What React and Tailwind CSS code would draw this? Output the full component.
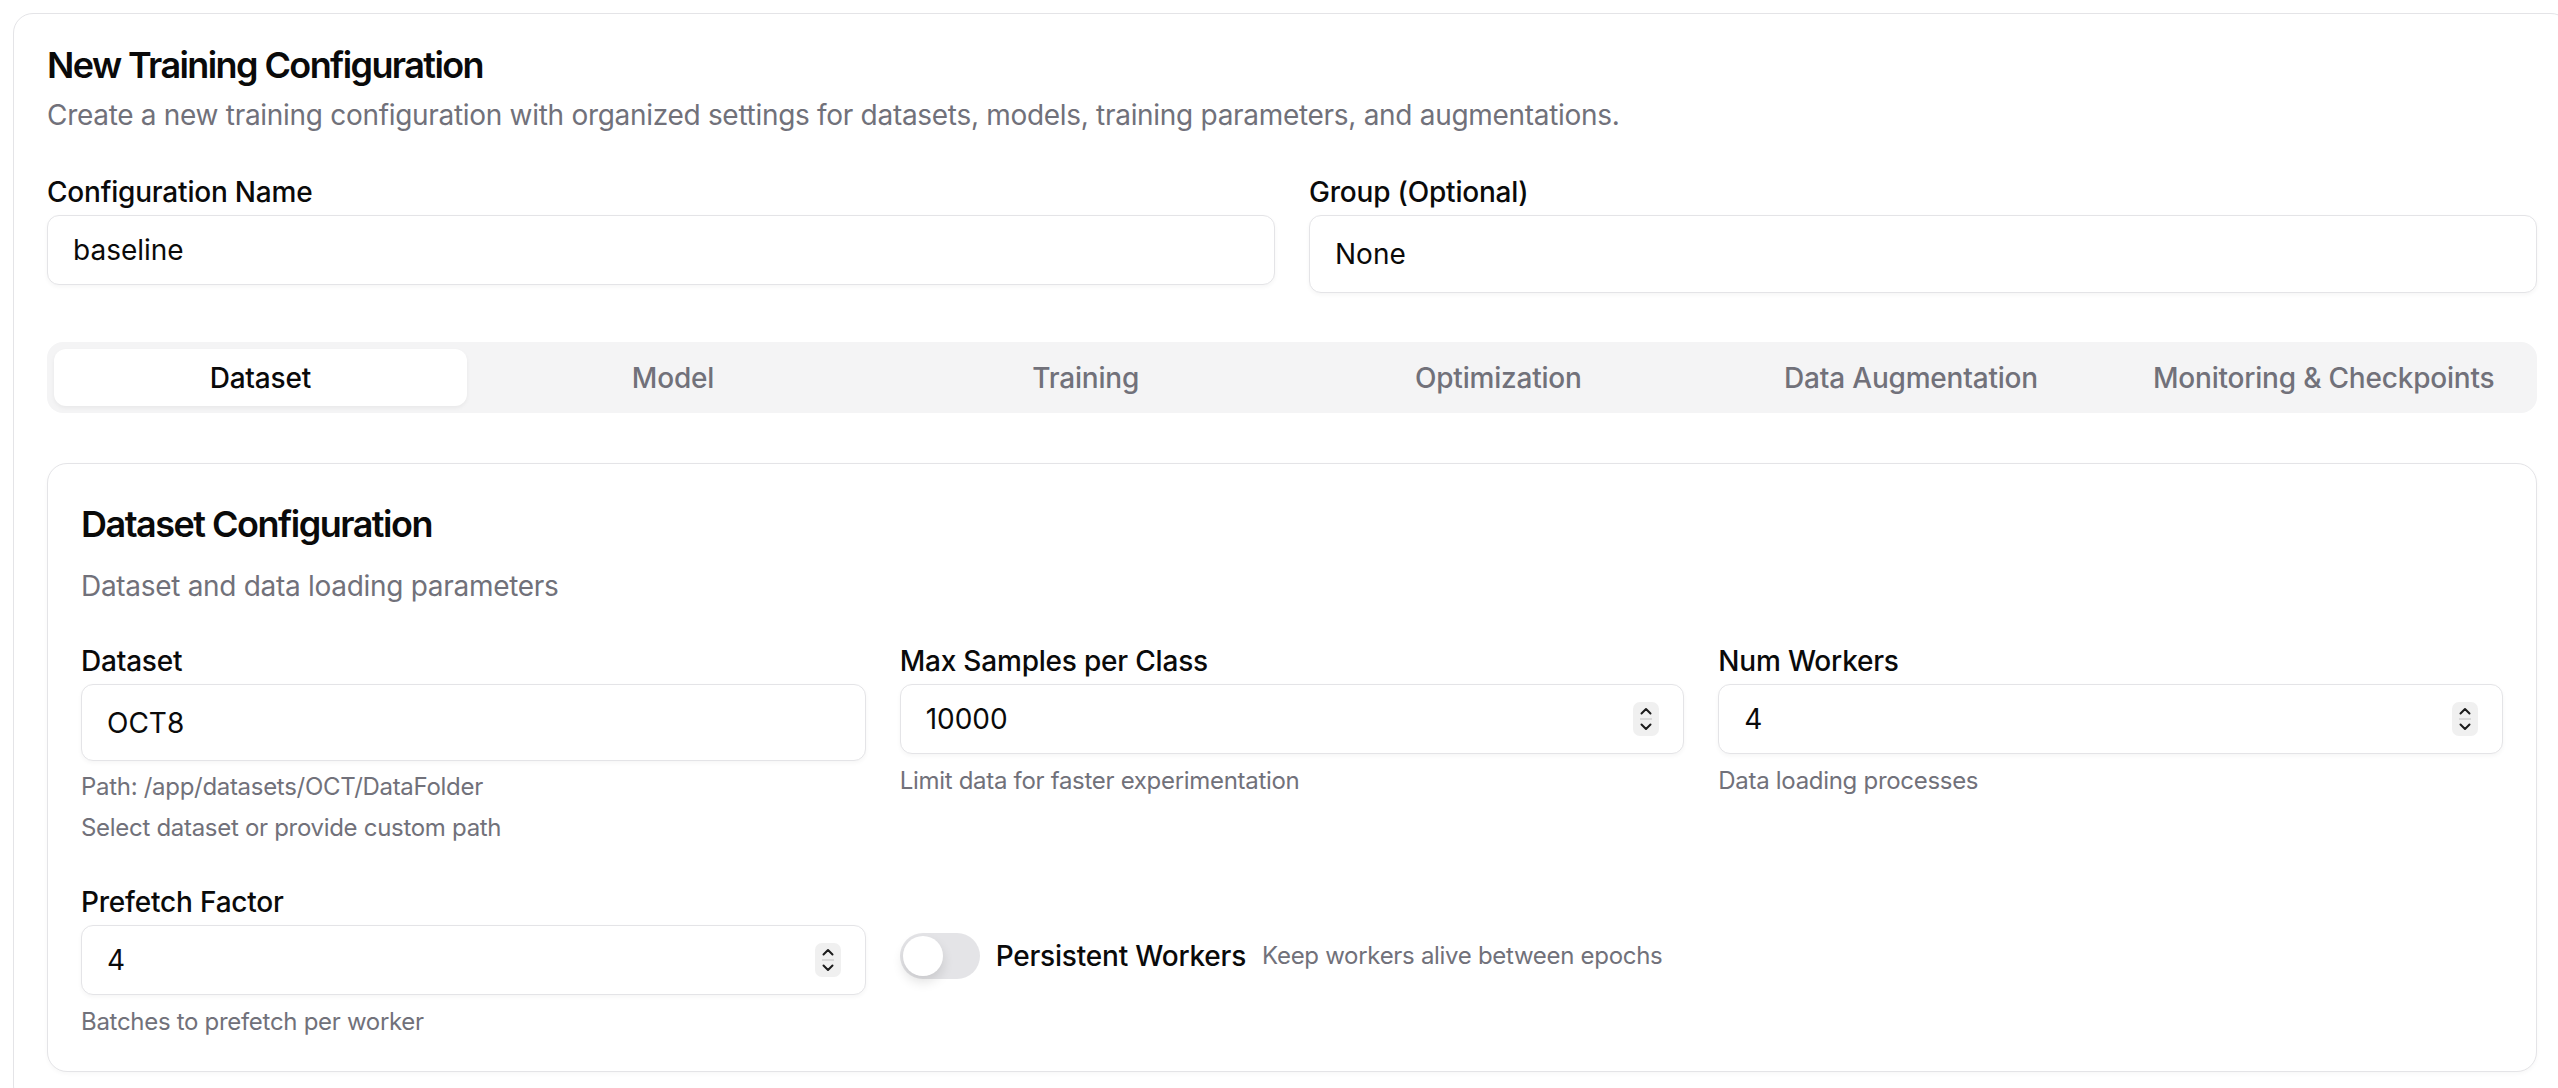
import React from "react";

const Spinner = () => (
  <svg width="26" height="34" viewBox="0 0 26 34" className="shrink-0">
    <rect x="0" y="0" width="26" height="34" rx="7" fill="#f0f0f0" />
    <path d="M8.5 11.5 L13 7 L17.5 11.5" fill="none" stroke="#1c1c1c" strokeWidth="2" strokeLinecap="round" strokeLinejoin="round" />
    <line x1="7" y1="17" x2="19" y2="17" stroke="#d9d9d9" strokeWidth="2" />
    <path d="M8.5 22.5 L13 27 L17.5 22.5" fill="none" stroke="#1c1c1c" strokeWidth="2" strokeLinecap="round" strokeLinejoin="round" />
  </svg>
);

function Label({ children }) {
  return <div className="text-[28px] leading-[28px] font-medium tracking-[-0.2px] text-[#0a0a0a]">{children}</div>;
}

function Box({ value, number, tall }) {
  return (
    <div
      className={
        tall
          ? "mt-[9px] flex h-[77px] items-center justify-between rounded-[12px] border border-[#e4e4e7] bg-white pl-[25px] pr-[24px] shadow-[0_2px_4px_rgba(0,0,0,0.04)]"
          : "mt-[9px] flex h-[70px] items-center justify-between rounded-[12px] border border-[#e4e4e7] bg-white pl-[25px] pr-[24px] shadow-[0_2px_4px_rgba(0,0,0,0.04)]"
      }
    >
      <span className="text-[28px] leading-[34px] text-[#0a0a0a]">{value}</span>
      {number ? <Spinner /> : null}
    </div>
  );
}

function Helper({ children }) {
  return <div className="mt-[11px] text-[24px] leading-[32px] tracking-[-0.3px] text-[#71717a]">{children}</div>;
}

function Field({ label, value, helper, number = false, tall = false }) {
  return (
    <div className="flex flex-col">
      <Label>{label}</Label>
      <Box value={value} number={number} tall={tall} />
      <Helper>{helper}</Helper>
    </div>
  );
}

const tabs = ["Dataset", "Model", "Training", "Optimization", "Data Augmentation", "Monitoring & Checkpoints"];

export default function App() {
  return (
    <div className="h-[1088px] w-full overflow-hidden bg-white [font-family:Inter,'Noto_Sans',sans-serif] text-[#0a0a0a]">
      <div className="ml-[13px] mt-[13px] w-[2558px] rounded-[20px] border border-[#e4e4e7] bg-white p-[33px]">
        <div className="text-[36px] leading-[36px] font-semibold tracking-[-1.6px]">New Training Configuration</div>
        <div className="mt-[12px] text-[28px] leading-[40px] tracking-[-0.3px] text-[#71717a]">
          Create a new training configuration with organized settings for datasets, models, training parameters, and augmentations.
        </div>

        <div className="mt-[43px] grid grid-cols-2 items-start gap-x-[34px]">
          <div className="flex flex-col">
            <Label>Configuration Name</Label>
            <div className="mt-[9px] flex h-[70px] items-center rounded-[12px] border border-[#e4e4e7] bg-white pl-[25px] shadow-[0_2px_4px_rgba(0,0,0,0.04)]">
              <span className="text-[28px] leading-[34px]">baseline</span>
            </div>
          </div>
          <div className="flex flex-col">
            <Label>Group (Optional)</Label>
            <div className="mt-[9px] flex h-[78px] items-center rounded-[12px] border border-[#e4e4e7] bg-white pl-[25px] shadow-[0_2px_4px_rgba(0,0,0,0.04)]">
              <span className="text-[28px] leading-[34px]">None</span>
            </div>
          </div>
        </div>

        <div className="mt-[49px] flex h-[71px] rounded-[16px] bg-[#f4f4f5] p-[7px]">
          {tabs.map((t, i) => (
            <div
              key={t}
              className={
                i === 0
                  ? "flex flex-1 items-center justify-center rounded-[12px] bg-white text-[28px] font-medium tracking-[-0.2px] text-[#0a0a0a] shadow-[0_2px_4px_rgba(0,0,0,0.05)]"
                  : "flex flex-1 items-center justify-center rounded-[12px] text-[28px] font-medium tracking-[-0.2px] text-[#71717a]"
              }
            >
              {t}
            </div>
          ))}
        </div>

        <div className="mt-[50px] rounded-[20px] border border-[#e4e4e7] bg-white p-[33px] shadow-[0_2px_4px_rgba(0,0,0,0.03)]">
          <div className="text-[36px] leading-[54px] font-semibold tracking-[-1.5px]">Dataset Configuration</div>
          <div className="mt-[15px] text-[28px] leading-[40px] tracking-[-0.3px] text-[#71717a]">Dataset and data loading parameters</div>

          <div className="mt-[41px] grid grid-cols-3 items-start gap-x-[34px] gap-y-[44px]">
            <div className="flex flex-col">
              <Label>Dataset</Label>
              <Box value="OCT8" tall />
              <div className="mt-[10px] text-[24px] leading-[32px] tracking-[-0.3px] text-[#71717a]">Path: /app/datasets/OCT/DataFolder</div>
              <div className="mt-[9px] text-[24px] leading-[32px] tracking-[-0.3px] text-[#71717a]">Select dataset or provide custom path</div>
            </div>
            <Field label="Max Samples per Class" value="10000" number helper="Limit data for faster experimentation" />
            <Field label="Num Workers" value="4" number helper="Data loading processes" />

            <Field label="Prefetch Factor" value="4" number helper="Batches to prefetch per worker" />
            <div className="flex items-center gap-[16px] pt-[45px]">
              <div className="flex h-[46px] w-[80px] shrink-0 items-center rounded-full bg-[#e4e4e7] p-[3px]">
                <div className="h-[40px] w-[40px] rounded-full bg-white shadow-[0_6px_12px_rgba(0,0,0,0.12)]" />
              </div>
              <span className="text-[28px] leading-[34px] font-medium tracking-[-0.2px]">Persistent Workers</span>
              <span className="text-[24px] leading-[32px] tracking-[-0.3px] text-[#71717a]">Keep workers alive between epochs</span>
            </div>
          </div>
        </div>
      </div>
    </div>
  );
}
